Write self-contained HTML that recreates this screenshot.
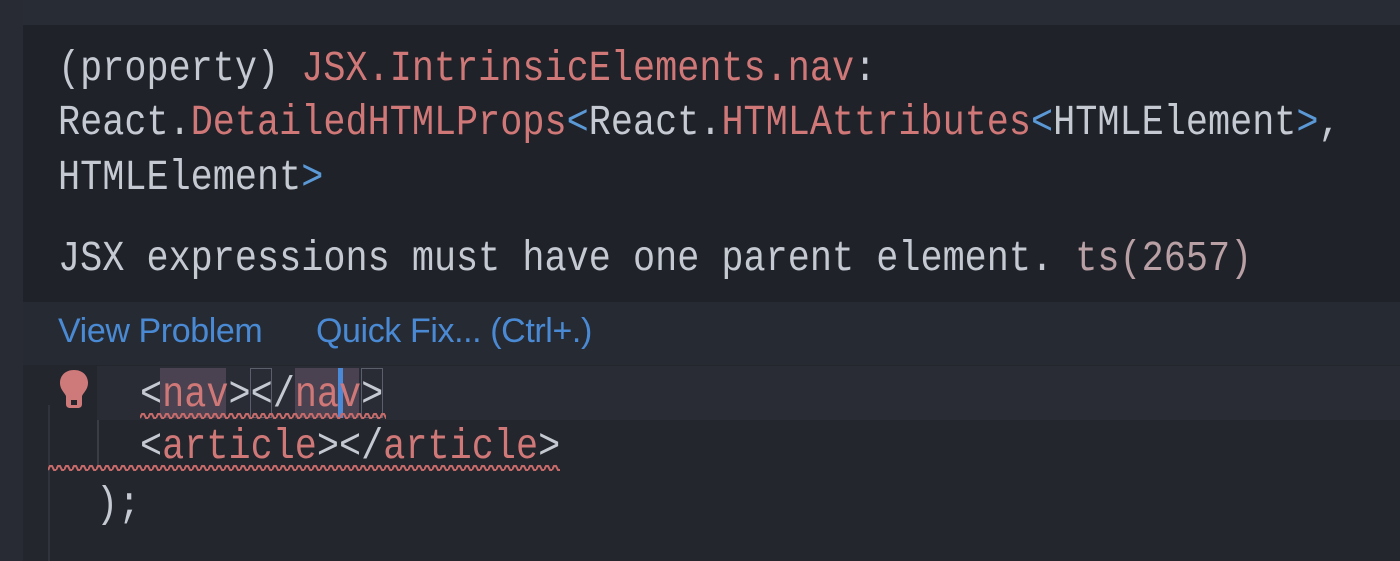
<!DOCTYPE html>
<html><head><style>
html,body{margin:0;padding:0;width:1400px;height:561px;overflow:hidden;background:#23262d;}
.m{font-family:"Liberation Mono",monospace;font-size:43px;position:absolute;white-space:pre;color:#c5c9d1;line-height:44px;transform:scaleX(0.857);transform-origin:0 0;}
.r{color:#d07878}.b{color:#5b98d6}.g{color:#b8a0a5}
#top{position:absolute;left:0;top:0;width:1400px;height:25px;background:#282c34}
#left{position:absolute;left:0;top:0;width:23px;height:561px;background:#282b33}
#box{position:absolute;left:23px;top:25px;width:1377px;height:277px;background:#1f2229}
#bar{position:absolute;left:23px;top:302px;width:1377px;height:63px;background:#262a32}
.l{position:absolute;font-family:"Liberation Sans",sans-serif;font-size:34px;color:#4a8ad4;top:312px;letter-spacing:-0.4px}
#cur{position:absolute;left:97px;top:366px;width:1303px;height:54px;background:#292c35}
.hl{position:absolute;background:#4a4250;top:368px;height:50px}
.bx{position:absolute;border:1px solid #5a5f6b;top:368px;height:48px}
.sq{position:absolute;height:8px;background-image:url("data:image/svg+xml,%3Csvg xmlns='http://www.w3.org/2000/svg' width='8' height='8'%3E%3Cpath d='M0 6 L2 2 L4 2 L6 6 L8 6' fill='none' stroke='%23c86a6a' stroke-width='2'/%3E%3C/svg%3E");}
</style></head><body>
<div id="top"></div><div id="left"></div>
<div id="box"></div><div id="bar"></div>
<div class="m" style="left:58px;top:47px">(property) <span class="r">JSX.IntrinsicElements.nav</span>:</div>
<div class="m" style="left:58px;top:101px">React.<span class="r">DetailedHTMLProps</span><span class="b">&lt;</span>React.<span class="r">HTMLAttributes</span><span class="b">&lt;</span>HTMLElement<span class="b">&gt;</span>,</div>
<div class="m" style="left:58px;top:156px">HTMLElement<span class="b">&gt;</span></div>
<div class="m" style="left:58px;top:237px">JSX expressions must have one parent element. <span class="g">ts(2657)</span></div>
<div class="l" style="left:58px">View Problem</div>
<div class="l" style="left:316px">Quick Fix... (Ctrl+.)</div>
<div id="cur"></div>
<div class="hl" style="left:160px;width:66px"></div>
<div class="hl" style="left:295px;width:64px"></div>
<div class="bx" style="left:250px;width:20px"></div>
<div class="bx" style="left:361px;width:20px"></div>
<div style="position:absolute;left:338px;top:368px;width:5px;height:50px;background:#4a88d8"></div>
<div style="position:absolute;left:97px;top:420px;width:2px;height:48px;background:#3a3d46"></div>
<div style="position:absolute;left:48px;top:405px;width:2px;height:156px;background:#30333b"></div>
<svg style="position:absolute;left:58px;top:368px" width="32" height="42" viewBox="0 0 32 42"><path d="M16 2 C7 2 2 8 2 15 C2 21 6 24 8 28 L8 36 C8 39 10 40 12 40 L20 40 C22 40 24 39 24 36 L24 28 C26 24 30 21 30 15 C30 8 25 2 16 2Z" fill="#cf7a7a"/><rect x="13" y="32" width="6" height="5" fill="#23262d"/></svg>
<div class="m" style="left:140px;top:373px">&lt;<span class="r">nav</span>&gt;&lt;/<span class="r">nav</span>&gt;</div>
<div class="m" style="left:140px;top:425px">&lt;<span class="r">article</span>&gt;&lt;/<span class="r">article</span>&gt;</div>
<div class="m" style="left:96px;top:483px">);</div>
<div class="sq" style="left:140px;top:412px;width:246px"></div>
<div class="sq" style="left:48px;top:464px;width:512px"></div>
</body></html>
